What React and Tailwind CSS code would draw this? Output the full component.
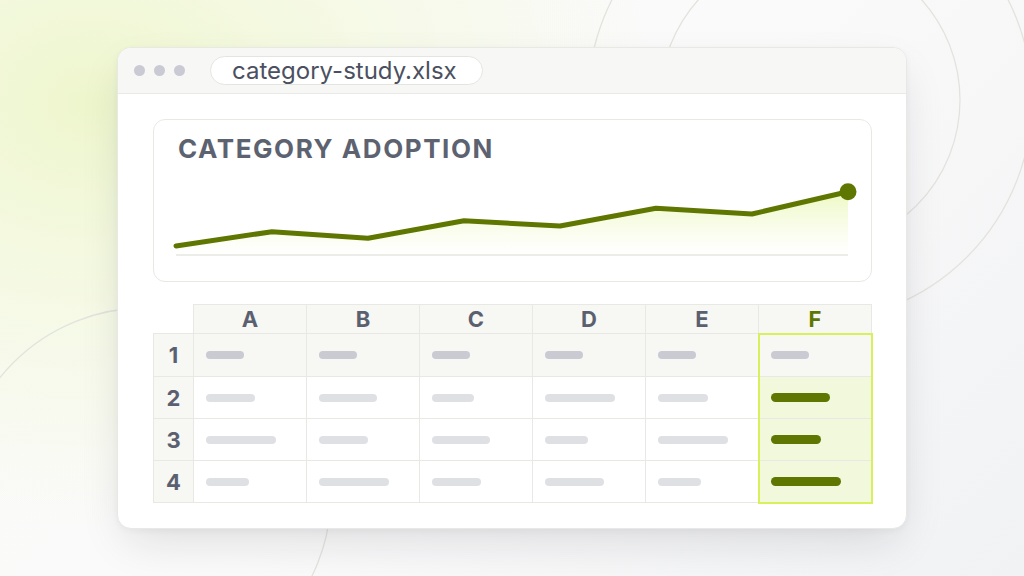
import React from "react";

const OLIVE = "#5f7700";

const rows = [
  { n: 1, widths: [38, 38, 38, 38, 38, 38], head: true },
  { n: 2, widths: [49, 58, 42, 70, 50, 59] },
  { n: 3, widths: [70, 49, 58, 43, 70, 50] },
  { n: 4, widths: [43, 70, 49, 59, 43, 70] },
];
const cols = ["A", "B", "C", "D", "E", "F"];

function Chart() {
  const pts = [
    [8, 66],
    [104, 51.7],
    [200, 58.3],
    [296, 40.7],
    [392, 46],
    [488, 28.3],
    [584, 34],
    [680, 11.7],
  ];
  const line = pts.map((p) => p.join(",")).join(" ");
  const area = `M8,75 L${pts.map((p) => p.join(",")).join(" L")} L680,75 Z`;
  return (
    <svg width="694" height="82" viewBox="0 0 694 82" className="mt-[15px] block">
      <defs>
        <linearGradient id="fillg" x1="0" y1="0" x2="0" y2="1">
          <stop offset="0%" stopColor="#edf8c2" stopOpacity="1" />
          <stop offset="100%" stopColor="#ffffff" stopOpacity="0.6" />
        </linearGradient>
      </defs>
      <path d={area} fill="url(#fillg)" />
      <line x1="8" y1="75" x2="680" y2="75" stroke="#e6e6e2" strokeWidth="1.5" />
      <polyline
        points={line}
        fill="none"
        stroke={OLIVE}
        strokeWidth="5"
        strokeLinejoin="round"
        strokeLinecap="round"
      />
      <circle cx="680" cy="11.7" r="8.5" fill={OLIVE} />
    </svg>
  );
}

function Table() {
  return (
    <div className="relative mt-[22px] w-[719px]">
      <div className="grid grid-cols-[41px_repeat(6,113px)] grid-rows-[30px_43px_42px_42px_42px]">
        <div className="border-r border-b border-[#e8e8e4]" />
        {cols.map((c) => (
          <div
            key={c}
            className={
              "flex items-center justify-center border-t border-r border-b border-[#e8e8e4] bg-[#f7f7f4] text-[22px] font-bold leading-none " +
              (c === "F" ? "text-[#5f7700]" : "text-[#5b6070]")
            }
          >
            {c}
          </div>
        ))}
        {rows.map((r) => (
          <React.Fragment key={r.n}>
            <div className="flex items-center justify-center border-l border-r border-b border-[#e8e8e4] bg-[#f7f7f4] text-[22px] font-bold leading-none text-[#5b6070]">
              {r.n}
            </div>
            {r.widths.map((w, i) => {
              const isF = i === 5;
              const bg = r.head ? "bg-[#f7f7f4]" : isF ? "bg-[#f2f8db]" : "bg-white";
              const bar = r.head
                ? "bg-[#c9cad2] h-[8px]"
                : isF
                ? "bg-[#5f7700] h-[9px]"
                : "bg-[#dfe0e4] h-[8px]";
              return (
                <div
                  key={i}
                  className={"flex items-center border-r border-b border-[#e8e8e4] pl-[12px] " + bg}
                >
                  <div className={"rounded-full " + bar} style={{ width: w }} />
                </div>
              );
            })}
          </React.Fragment>
        ))}
      </div>
      <div className="pointer-events-none absolute left-[605px] top-[29px] h-[171px] w-[115px] border-2 border-[#d7f05c]" />
    </div>
  );
}

export default function App() {
  return (
    <div className="relative h-[576px] w-[1024px] overflow-hidden bg-[radial-gradient(ellipse_560px_420px_at_9%_18%,#eef6cd_0%,#f4f9e0_35%,rgba(250,250,249,0)_100%),linear-gradient(135deg,#fbfbf9_0%,#fafafa_50%,#f1f2f4_100%)] font-['Inter',sans-serif]">
      <svg className="absolute inset-0" width="1024" height="576" viewBox="0 0 1024 576">
        <circle cx="810" cy="100" r="150" fill="none" stroke="#e3e3de" strokeWidth="1.3" />
        <circle cx="810" cy="100" r="222" fill="none" stroke="#e3e3de" strokeWidth="1.3" />
        <circle cx="145" cy="494" r="186" fill="none" stroke="#e3e3de" strokeWidth="1.3" />
      </svg>
      <div className="relative flex pl-[117px] pt-[47px]">
        <div className="flex h-[482px] w-[790px] flex-col overflow-hidden rounded-[14px] border border-[#e8e8e5] bg-white shadow-[0_18px_45px_-8px_rgba(20,24,40,0.13),0_2px_6px_rgba(20,24,40,0.04)]">
          <div className="flex h-[46px] shrink-0 items-center border-b border-[#e9e9e6] bg-[#f7f7f5] pl-[16px]">
            <div className="flex gap-[9px]">
              <span className="h-[11px] w-[11px] rounded-full bg-[#c9cad3]" />
              <span className="h-[11px] w-[11px] rounded-full bg-[#c9cad3]" />
              <span className="h-[11px] w-[11px] rounded-full bg-[#c9cad3]" />
            </div>
            <div className="ml-[25px] flex h-[29px] w-[273px] items-center rounded-full border border-[#e4e4e0] bg-white pl-[21px] text-[24px] leading-none text-[#4b5060]">
              category-study.xlsx
            </div>
          </div>
          <div className="flex flex-col px-[35px] pt-[25px]">
            <div className="flex h-[163px] w-[719px] flex-col rounded-[12px] border border-[#e8e8e4] bg-white pl-[14px] pt-[13px]">
              <div className="ml-[10px] text-[26px] font-bold leading-[32px] tracking-[0.06em] text-[#5d6270]">
                CATEGORY ADOPTION
              </div>
              <Chart />
            </div>
            <Table />
          </div>
        </div>
      </div>
    </div>
  );
}
